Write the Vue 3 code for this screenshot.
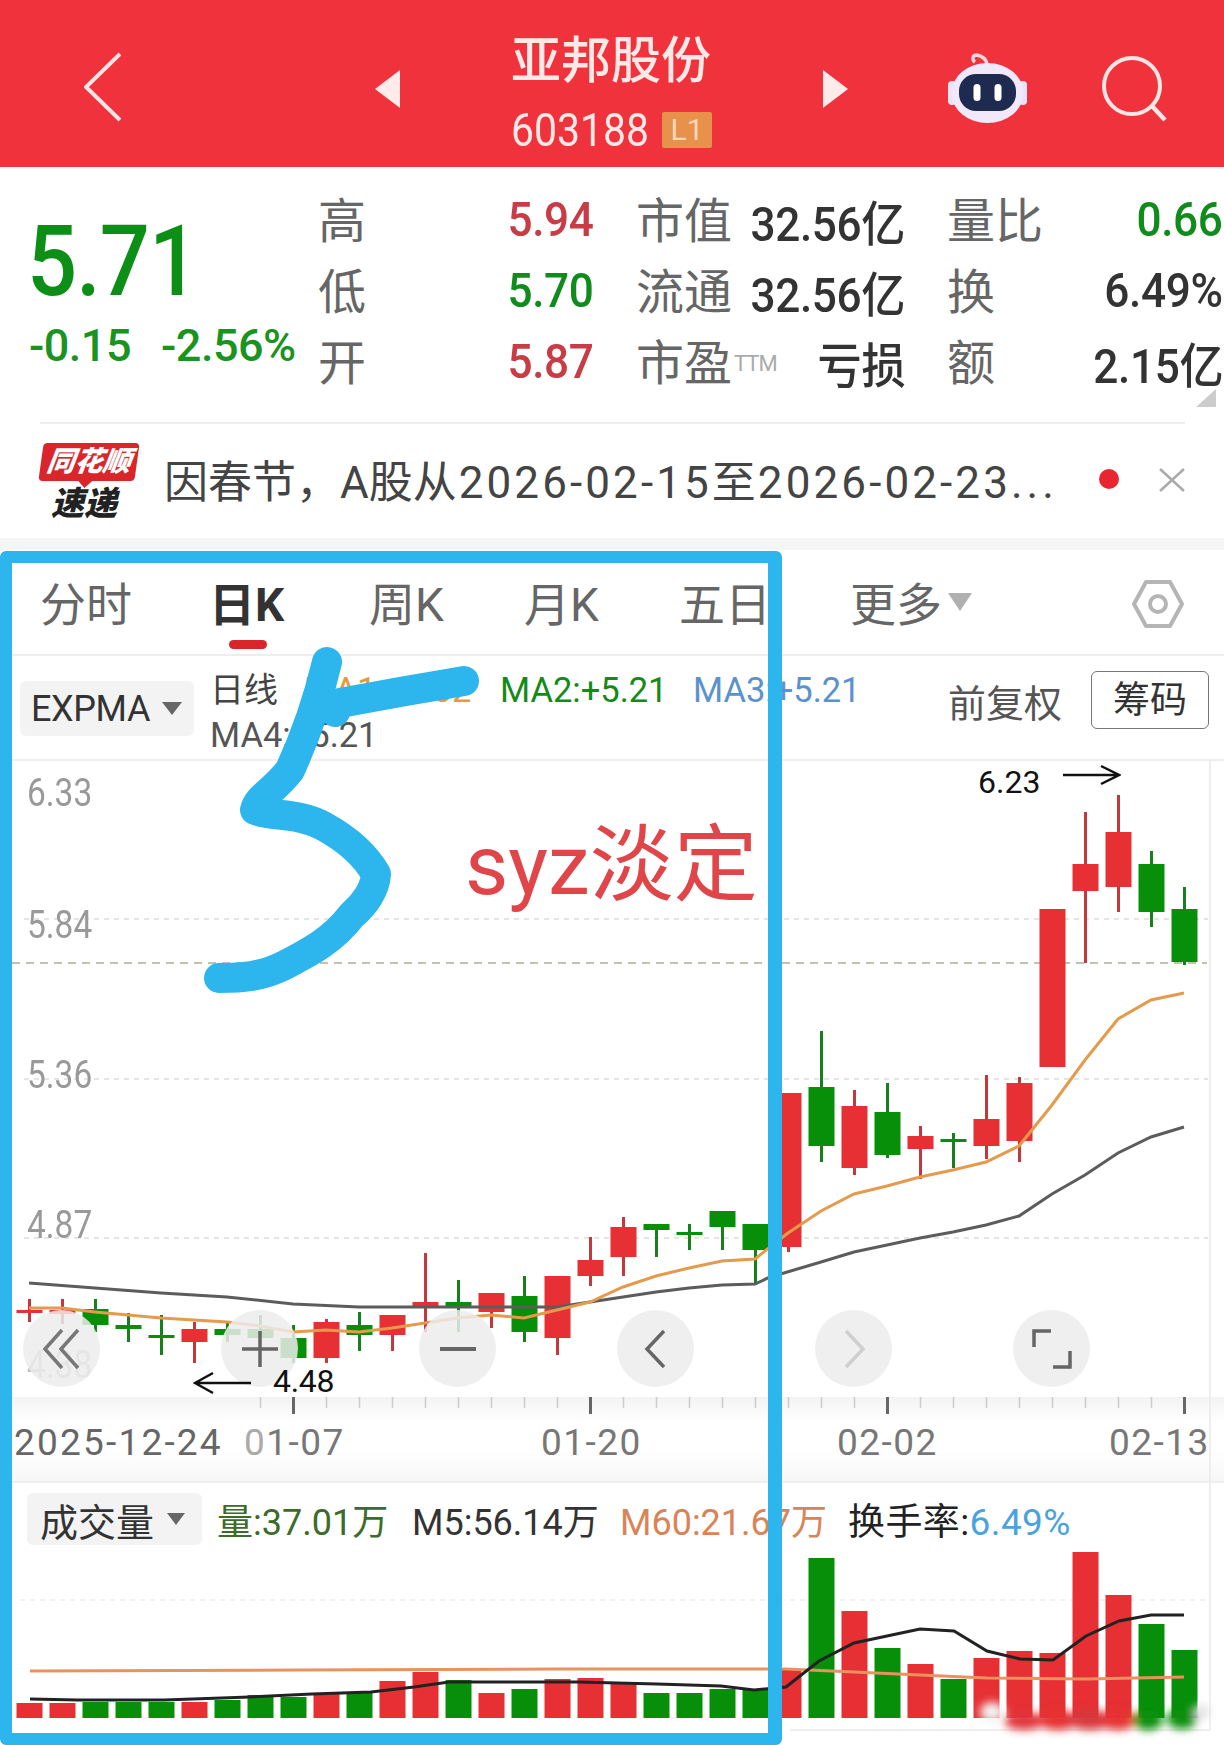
<script setup>
const cx = (i) => 29.5 + 33 * i
const raw = [
  ['r',1299,1322,1310,1313],['r',1299,1324,1310,1314],['g',1299,1332,1309,1325],['g',1313,1342,1325,1329],
  ['g',1315,1355,1335,1338],['r',1322,1363,1329,1342],['g',1322,1342,1329,1335],['g',1315,1340,1329,1338],
  ['g',1325,1363,1338,1358],['r',1319,1363,1322,1358],['g',1312,1351,1325,1335],['r',1315,1351,1315,1335],
  ['r',1253,1332,1302,1308],['g',1280,1332,1302,1308],['r',1293,1328,1293,1312],['g',1276,1342,1296,1332],
  ['r',1276,1355,1276,1338],['r',1237,1286,1260,1276],['r',1217,1276,1227,1257],['g',1224,1257,1224,1230],
  ['g',1224,1250,1232,1235],['g',1211,1250,1211,1227],['g',1224,1284,1224,1250],['r',1093,1252,1093,1247],
  ['g',1031,1162,1087,1146],['r',1090,1175,1106,1168],['g',1083,1158,1112,1155],['r',1126,1179,1136,1149],
  ['g',1133,1168,1139,1141],['r',1075,1159,1119,1146],['r',1077,1162,1083,1141],['r',909,1067,909,1067],
  ['r',812,963,864,891],['r',795,912,832,887],['g',851,927,864,912],['g',887,965,909,962]
]
const candles = raw.map(([c, hi, lo, top, bot], i) => ({
  x: cx(i), wickColor: c === 'r' ? '#c2383c' : '#17801c', bodyColor: c === 'r' ? '#e63033' : '#078f0a', hi, lo, top, bot
}))
const orangeLine = '29,1308 62,1308 95,1312 161,1318 227,1322 260,1326 293,1332 326,1330 359,1332 392,1328 425,1323 458,1318 491,1315 524,1318 557,1310 590,1302 623,1287 656,1276 689,1268 722,1261 755,1259 770,1247 788,1233 821,1211 854,1194 887,1186 920,1177 953,1170 986,1162 1019,1146 1052,1105 1085,1060 1118,1019 1151,1000 1184,993'
const grayLine = '29,1283 95,1288 161,1293 227,1297 293,1304 359,1307 425,1307 491,1307 557,1307 590,1302 623,1297 656,1292 689,1288 722,1285 755,1284 770,1277 784,1273 821,1262 854,1252 887,1245 920,1238 953,1232 986,1225 1019,1216 1052,1194 1085,1175 1118,1153 1151,1137 1184,1127'
const volTops = [1703,1703,1702,1702,1702,1702,1700,1695,1697,1693,1693,1681,1672,1680,1693,1689,1679,1678,1684,1693,1693,1689,1690,1670,1558,1611,1648,1664,1679,1658,1651,1653,1552,1595,1624,1650]
const volColors = 'rrgggrgggrgrrgrgrrrggggrgrgrgrrrrrgg'
const volBars = volTops.map((top, i) => ({ x: cx(i) - 13, top, h: 1718 - top, fill: volColors[i] === 'r' ? '#e63033' : '#078f0a' }))
const volOrange = '30,1671 300,1670 560,1669 786,1669 854,1672 920,1675 987,1678 1086,1679 1184,1677'
const volBlack = '30,1699 78,1700 164,1700 250,1697 312,1694 371,1692 414,1687 449,1682 527,1682 578,1682 657,1684 721,1686 754,1690 786,1687 819,1661 854,1643 920,1629 954,1631 987,1651 1020,1659 1053,1660 1086,1636 1119,1621 1151,1615 1184,1615'
const ticks = Array.from({ length: 29 }, (_, k) => k + 7).map((i) => ({ x: cx(i), major: [8, 17, 26, 35].includes(i) }))
const blobs = [
  [992,1712,'#f2f2f2',12,10],[1024,1721,'#e0343a',20,9],[1058,1720,'#e63033',20,10],[1090,1720,'#d6383c',22,10],[1118,1720,'#e63033',18,10],[1148,1720,'#078f0a',15,10],[1182,1719,'#078f0a',15,10],[1202,1712,'#e6e6e6',8,8]
]
</script>

<template>
  <div class="page">
    <header class="topbar">
      <svg class="back" width="37" height="70" viewBox="0 0 37 70"><path d="M36 2 2 35l34 33" fill="none" stroke="#ffe6e4" stroke-width="4"/></svg>
      <span class="tri tri-left"></span>
      <div class="title">
        <div class="name">亚邦股份</div>
        <div class="code"><span class="codenum">603188</span><b class="badge">L1</b></div>
      </div>
      <span class="tri tri-right"></span>
      <svg class="robot" width="80" height="72" viewBox="0 0 80 72">
        <path d="M27 11c-3-2-3-7 2-7 5 1 9 4 10 9" fill="none" stroke="#f8d7dc" stroke-width="3.5"/>
        <rect x="0" y="30" width="8" height="24" rx="4" fill="#e9e3f7"/>
        <rect x="71" y="30" width="8" height="24" rx="4" fill="#e9e3f7"/>
        <ellipse cx="39.500" cy="42" rx="36" ry="30" fill="#f1e9fb"/>
        <rect x="11" y="23" width="57" height="37" rx="17" fill="#1f2a50"/>
        <rect x="25.500" y="33" width="7" height="17" rx="3.500" fill="#fff"/>
        <rect x="46.500" y="33" width="7" height="17" rx="3.500" fill="#fff"/>
      </svg>
      <svg class="search" width="66" height="66" viewBox="0 0 66 66"><circle cx="30" cy="30" r="28" fill="none" stroke="#ffe6e4" stroke-width="4"/><path d="M50 50l13 14" stroke="#ffe6e4" stroke-width="4.500"/></svg>
    </header>

    <section class="stats">
      <div class="price">
        <div class="big">5.71</div>
        <div class="chg"><span>-0.15</span><span>-2.56%</span></div>
      </div>
      <div class="cells">
        <div class="cell c1"><span class="lab">高</span><span class="val red">5.94</span></div>
        <div class="cell c2"><span class="lab">市值</span><span class="val dark">32.56亿</span></div>
        <div class="cell c3"><span class="lab">量比</span><span class="val green">0.66</span></div>
        <div class="cell c1"><span class="lab">低</span><span class="val green">5.70</span></div>
        <div class="cell c2"><span class="lab">流通</span><span class="val dark">32.56亿</span></div>
        <div class="cell c3"><span class="lab">换</span><span class="val dark">6.49%</span></div>
        <div class="cell c1"><span class="lab">开</span><span class="val red">5.87</span></div>
        <div class="cell c2"><span class="lab">市盈<small>TTM</small></span><span class="val dark">亏损</span></div>
        <div class="cell c3"><span class="lab">额</span><span class="val dark">2.15亿</span></div>
      </div>
      <span class="corner"></span>
    </section>

    <section class="news">
      <div class="logo">
        <div class="tag">同花顺</div>
        <div class="sub">速递</div>
      </div>
      <div class="news-text">因春节，A股从<span class="wide">2026-02-15</span>至<span class="wide">2026-02-23</span><span class="dots">...</span></div>
      <span class="dot"></span>
      <svg class="close" width="26" height="24" viewBox="0 0 26 24"><path d="M1 1l24 22M25 1 1 23" stroke="#aaa" stroke-width="2.500"/></svg>
    </section>
    <div class="strip"></div>

    <nav class="tabs">
      <span class="tab t1">分时</span>
      <span class="tab t2 on">日K</span>
      <span class="tab t3">周K</span>
      <span class="tab t4">月K</span>
      <span class="tab t5">五日</span>
      <span class="tab t6">更多</span>
      <span class="more-tri"></span>
      <svg class="hex" width="54" height="50" viewBox="0 0 54 50"><path d="M15 3h24l12 22-12 22H15L3 25Z" fill="none" stroke="#b5b5b5" stroke-width="4" stroke-linejoin="round"/><circle cx="27" cy="25" r="8" fill="none" stroke="#b5b5b5" stroke-width="4"/></svg>
    </nav>

    <section class="ma">
      <div class="select"><span>EXPMA</span><i class="caret"></i></div>
      <div class="ma-text">
        <div class="ma-row"><span class="ri">日线</span><span class="m1">MA1:+5.02</span><span class="m2">MA2:+5.21</span><span class="m3">MA3:+5.21</span></div>
        <div class="m4">MA4:+5.21</div>
      </div>
      <span class="fq">前复权</span>
      <span class="chip">筹码</span>
    </section>

    <section class="chart">
      <svg class="canvas" width="1224" height="636" viewBox="0 761 1224 636">
        <g stroke="#ddd" stroke-width="1.500" stroke-dasharray="5 5">
          <path d="M24 919H1208M24 1079H1208M24 1238H1208"/>
        </g>
        <path d="M12 963H1207" stroke="#b0ad98" stroke-width="1.500" stroke-dasharray="8 6"/>
        <path d="M1210 761V1397" stroke="#eee" stroke-width="2"/>
        <g v-for="(c, i) in candles" :key="i">
          <rect :x="c.x - 1.5" :y="c.hi" width="3" :height="c.lo - c.hi" :fill="c.wickColor"/>
          <rect :x="c.x - 13" :y="c.top" width="26" :height="Math.max(c.bot - c.top, 3)" :fill="c.bodyColor"/>
        </g>
        <polyline :points="grayLine" fill="none" stroke="#5c5c5c" stroke-width="3"/>
        <polyline :points="orangeLine" fill="none" stroke="#e59a4c" stroke-width="3"/>
      </svg>

      <span class="yl y1">6.33</span>
      <span class="yl y2">5.84</span>
      <span class="yl y3">5.36</span>
      <span class="yl y4">4.87</span>
      <span class="yl y5">4.38</span>

      <div class="btns">
        <span class="btn"><svg width="44" height="44" viewBox="0 0 44 44"><path d="M22 3 5 22l17 19M38 3 21 22l17 19" fill="none" stroke="#777" stroke-width="3.500"/></svg></span>
        <span class="btn"><svg width="40" height="40" viewBox="0 0 40 40"><path d="M2 20h36M20 2v36" fill="none" stroke="#666" stroke-width="3.500"/></svg></span>
        <span class="btn"><svg width="40" height="40" viewBox="0 0 40 40"><path d="M2 20h36" fill="none" stroke="#666" stroke-width="4"/></svg></span>
        <span class="btn"><svg width="40" height="40" viewBox="0 0 40 40"><path d="M28 2 11 20l17 18" fill="none" stroke="#666" stroke-width="3.500"/></svg></span>
        <span class="btn"><svg width="40" height="40" viewBox="0 0 40 40"><path d="M12 2l17 18-17 18" fill="none" stroke="#cfcfcf" stroke-width="3.500"/></svg></span>
        <span class="btn"><svg width="40" height="42" viewBox="0 0 40 42"><path d="M19 3H2v16M21 39h17V23" fill="none" stroke="#666" stroke-width="3.500"/></svg></span>
      </div>

      <span class="note n623">6.23</span>
      <svg class="arrow a623" width="58" height="22" viewBox="0 0 58 22"><path d="M0 11h56M38 2l18 9-18 9" fill="none" stroke="#111" stroke-width="2.500"/></svg>
      <span class="note n448">4.48</span>
      <svg class="arrow a448" width="58" height="24" viewBox="0 0 58 24"><path d="M58 12H2M20 2 2 12l18 10" fill="none" stroke="#111" stroke-width="2.500"/></svg>
    </section>

    <section class="axis">
      <svg class="canvas" width="1224" height="84" viewBox="0 1397 1224 84">
        <path d="M1210 1397V1481" stroke="#eee" stroke-width="2"/>
        <rect v-for="t in ticks" :key="t.x" :x="t.x - (t.major ? 1.5 : 0.75)" y="1397" :width="t.major ? 3 : 1.5" :height="t.major ? 17 : 11" :fill="t.major ? '#666' : '#ccc'"/>
      </svg>
      <div class="dates">
        <span class="d0">2025-12-24</span>
        <span class="d1"><i>0</i>1-07</span>
        <span class="d2">01-20</span>
        <span class="d3">02-02</span>
        <span class="d4">02-13</span>
      </div>
    </section>

    <section class="vol">
      <svg class="canvas" width="1224" height="264" viewBox="0 1481 1224 264">
        <defs><filter id="soft" x="-50%" y="-50%" width="200%" height="200%"><feGaussianBlur stdDeviation="4"/></filter></defs>
        <path d="M20 1600H1208" stroke="#eee" stroke-width="1.500" stroke-dasharray="5 5"/>
        <path d="M1210 1483V1730M790 1730H1210" stroke="#eee" stroke-width="2"/>
        <rect v-for="(b, i) in volBars" :key="i" :x="b.x" :y="b.top" width="26" :height="b.h" :fill="b.fill"/>
        <polyline :points="volOrange" fill="none" stroke="#e8925f" stroke-width="3"/>
        <polyline :points="volBlack" fill="none" stroke="#222" stroke-width="3"/>
        <g filter="url(#soft)">
          <ellipse v-for="(b, i) in blobs" :key="i" :cx="b[0]" :cy="b[1]" :rx="b[3]" :ry="b[4]" :fill="b[2]"/>
        </g>
      </svg>
      <div class="vol-head">
        <div class="select vsel"><span>成交量</span><i class="caret"></i></div>
        <span class="vq">量:37.01万</span>
        <span class="v5">M5:56.14万</span>
        <span class="v60">M60:21.67万</span>
        <span class="vh">换手率:<em>6.49%</em></span>
      </div>
    </section>

    <!-- hand-drawn annotation layer -->
    <svg class="ink" width="1224" height="1745" viewBox="0 0 1224 1745">
      <path d="M327 662C318 700 306 735 290 770 275 790 258 797 255 810 270 817 300 812 325 827 352 842 368 860 376 874 375 890 364 905 352 915 333 940 310 952 285 965 262 977 240 978 219 978" fill="none" stroke="#2db5ee" stroke-width="30" stroke-linecap="round" stroke-linejoin="round"/>
      <path d="M464 681 400 692 340 703 335 712" fill="none" stroke="#2db5ee" stroke-width="30" stroke-linecap="round" stroke-linejoin="round"/>
    </svg>
    <div class="frame"></div>
    <div class="stamp">syz淡定</div>
  </div>
</template>

<style>
html, body { margin: 0; background: #fff; }
</style>

<style scoped>
.page {
  position: relative;
  width: 1224px;
  height: 1745px;
  overflow: hidden;
  background: #fff;
  font-family: Roboto, "Noto Sans CJK SC", sans-serif;
  color: #333;
}
.topbar {
  height: 167px;
  background: #f0323c;
  display: flex;
  align-items: center;
  color: #ffe9e6;
}
.back { margin-left: 84px; margin-top: 6px; }
.tri { width: 0; height: 0; border-top: 19px solid transparent; border-bottom: 19px solid transparent; margin-top: 10px; }
.tri-left { margin-left: 254px; border-right: 25px solid #ffecea; }
.tri-right { border-left: 25px solid #ffecea; }
.title { width: 312px; margin-left: 111px; align-self: flex-start; margin-top: 31px; }
.name { font-size: 50px; line-height: 60px; font-weight: 500; }
.code { display: flex; align-items: center; gap: 14px; margin-top: 20px; height: 38px; font-size: 46px; }
.codenum { display: block; transform: scaleX(.89); transform-origin: left; margin-right: -18px; }
.badge { display: block; width: 50px; height: 36px; background: #e8914a; border-radius: 2px; font-size: 30px; font-weight: 400; line-height: 36px; text-align: center; color: #fbd7ba; }
.robot { margin-left: 100px; margin-top: 6px; }
.search { margin-left: 74px; margin-top: 10px; }

.stats { position: relative; height: 255px; display: flex; box-sizing: border-box; padding-top: 18px; }
.price { width: 318px; flex: none; }
.big { font-size: 98px; line-height: 90px; font-weight: 500; color: #0d8f17; margin: 32px 0 0 27px; transform: scaleX(.9); transform-origin: left; letter-spacing: -1px; }
.chg { display: flex; gap: 30px; margin: 14px 0 0 29px; font-size: 45px; line-height: 50px; font-weight: 500; color: #1a9320; letter-spacing: -.5px; }
.cells { display: grid; grid-template-columns: 276px 269px 276px; column-gap: 42px; grid-auto-rows: 71px; width: 906px; }
.cell { display: flex; justify-content: space-between; align-items: center; white-space: nowrap; }
.lab { font-size: 48px; color: #666; margin-top: -7px; }
.lab small { font-size: 22px; color: #aaa; vertical-align: 9px; letter-spacing: -1px; margin-left: 2px; }
.val { font-size: 48px; letter-spacing: -.4px; font-weight: 500; transform: scaleX(.92); transform-origin: right; margin-top: -2px; }
.red { color: #c73c45; }
.green { color: #0f8c1b; }
.dark { color: #333; }
.corner { position: absolute; right: 8px; bottom: 15px; width: 0; height: 0; border-left: 20px solid transparent; border-bottom: 18px solid #ccc; }

.news { height: 116px; border-top: 2px solid transparent; display: flex; align-items: center; position: relative; box-sizing: border-box; }
.news::before { content: ""; position: absolute; left: 40px; right: 39px; top: -2px; height: 2px; background: #eee; }
.logo { width: 96px; margin-left: 41px; margin-top: 2px; flex: none; }
.tag { position: relative; height: 38px; background: #d9262b; border-radius: 4px; transform: skewX(-8deg); color: #fff; font-size: 28px; font-weight: 900; font-style: italic; line-height: 38px; text-align: center; white-space: nowrap; }
.tag::after { content: ""; position: absolute; left: 40px; top: 38px; border-left: 7px solid transparent; border-right: 7px solid transparent; border-top: 7px solid #d9262b; }
.sub { margin: 6px 0 0 10px; font-size: 33px; line-height: 34px; font-weight: 900; font-style: italic; color: #222; white-space: nowrap; }
.news-text { width: 901px; margin-left: 27px; margin-top: -4px; flex: none; font-size: 44px; color: #444; white-space: nowrap; }
.wide { letter-spacing: 3.1px; margin-left: 2px; }
.dots { letter-spacing: 4px; }
.dot { width: 20px; height: 20px; margin-left: 34px; border-radius: 50%; background: #e9262f; flex: none; margin-top: -4px; }
.close { margin-left: 40px; margin-top: -2px; flex: none; }
.strip { height: 12px; background: #f5f5f5; }

.tabs { position: relative; height: 106px; box-sizing: border-box; border-bottom: 2px solid #eee; display: grid; grid-template-columns: 173px 156px 155px 155px 171px 98px 180px 54px; align-items: center; padding-left: 40px; }
.tab { font-size: 46px; color: #666; white-space: nowrap; margin-top: -3px; }
.t2 { margin-left: -4px; }
.tab.on { color: #333; font-weight: 700; position: relative; }
.tab.on::after { content: ""; position: absolute; left: 20px; top: 72px; width: 38px; height: 9px; border-radius: 5px; background: #d9262b; }
.more-tri { width: 0; height: 0; border-left: 12px solid transparent; border-right: 12px solid transparent; border-top: 18px solid #b0b0b0; }
.hex { margin-top: 4px; margin-left: 3px; }

.ma { height: 105px; box-sizing: border-box; border-bottom: 2px solid #eee; display: flex; align-items: flex-start; position: relative; }
.select { display: flex; align-items: center; background: #f3f3f3; border-radius: 6px; box-sizing: border-box; height: 55px; font-size: 36px; color: #333; }
.ma > .select { width: 174px; margin: 25px 0 0 20px; padding-left: 11px; gap: 12px; letter-spacing: -.4px; flex: none; }
.caret { width: 0; height: 0; border-left: 10px solid transparent; border-right: 10px solid transparent; border-top: 13px solid #666; }
.ma-text { width: 690px; margin-left: 16px; font-size: 34.500px; flex: none; }
.ma-row { display: flex; height: 55px; align-items: center; margin-top: 6px; white-space: nowrap; }
.ri { width: 94px; color: #444; font-size: 34px; margin-top: -4px; }
.m1 { width: 196px; color: #e59a3c; }
.m2 { width: 193px; color: #148a17; }
.m3 { color: #5b92cc; }
.m4 { color: #555; line-height: 40px; margin-top: -2px; }
.fq { margin: 17px 0 0 48px; font-size: 38px; color: #555; flex: none; white-space: nowrap; }
.chip { margin: 15px 0 0 29px; width: 118px; height: 58px; box-sizing: border-box; border: 1.500px solid #777; border-radius: 6px; text-align: center; font-size: 37px; line-height: 58px; color: #333; flex: none; }

.chart { position: relative; height: 636px; }
.canvas { position: absolute; left: 0; top: 0; display: block; }
.yl { position: absolute; left: 27px; font-size: 38px; line-height: 40px; color: #999; transform: scaleX(.88); transform-origin: left; }
.y1 { top: 12px; }
.y2 { top: 144px; }
.y3 { top: 294px; }
.y4 { top: 444px; }
.y5 { top: 584px; color: #bbb; }
.btns { position: absolute; left: 23px; top: 549px; display: flex; gap: 121px; }
.btn { width: 77px; height: 77px; flex: none; border-radius: 50%; background: rgba(236, 236, 236, .85); display: flex; align-items: center; justify-content: center; }
.note { position: absolute; font-size: 32px; line-height: 36px; color: #111; }
.n623 { left: 978px; top: 3px; }
.n448 { left: 273px; top: 602px; letter-spacing: -.3px; }
.arrow { position: absolute; }
.a623 { left: 1063px; top: 3px; }
.a448 { left: 193px; top: 610px; }

.axis { position: relative; height: 84px; background: linear-gradient(#f3f3f3, #fff 30%, #fff 60%, #f7f7f7); }
.dates { position: absolute; left: 0; top: 0; width: 1224px; height: 84px; display: grid; grid-template-columns: 230px 297px 296px 272px 100px; padding-left: 14px; box-sizing: border-box; align-items: center; font-size: 37px; color: #777; white-space: nowrap; }
.dates span { margin-top: 6px; letter-spacing: 1.5px; }
.dates .d0 { color: #666; letter-spacing: 2.2px; }
.d1 i { font-style: normal; color: #aaa; }

.vol { position: relative; height: 264px; border-top: 2px solid #eee; box-sizing: border-box; }
.vol .canvas { top: -2px; }
.vol-head { position: relative; display: flex; align-items: center; height: 52px; margin-top: 10px; white-space: nowrap; font-size: 36px; }
.vsel { width: 175px; height: 52px; margin-left: 27px; padding-left: 13px; font-size: 38px; gap: 13px; flex: none; }
.vsel .caret { border-left-width: 9px; border-right-width: 9px; border-top-width: 12px; }
.vq { margin-left: 15px; width: 195px; color: #3d6b2a; flex: none; }
.v5 { color: #333; width: 208px; flex: none; }
.v60 { color: #d98458; width: 228px; flex: none; }
.vh { color: #222; font-size: 37px; letter-spacing: .4px; }
.vh em { font-style: normal; color: #4aa3dc; }

.ink { position: absolute; left: 0; top: 0; pointer-events: none; }
.frame { position: absolute; left: 0; top: 551px; width: 782px; height: 1194px; box-sizing: border-box; border: 12px solid #2db5ee; border-right-width: 14px; border-radius: 6px; pointer-events: none; }
.stamp { position: absolute; left: 465px; top: 816px; font-size: 84px; line-height: 100px; color: #e0454a; white-space: nowrap; }
</style>
